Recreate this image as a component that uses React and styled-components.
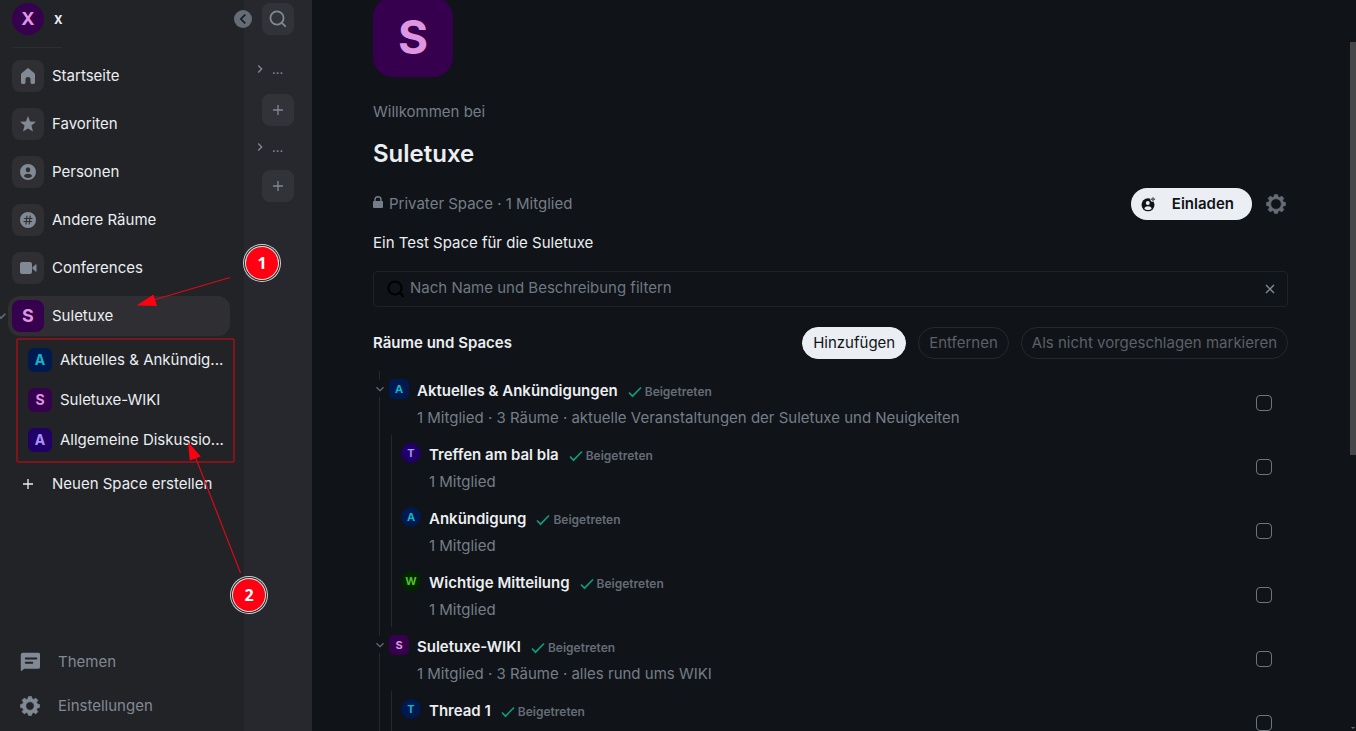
import React, { useState } from 'react'
import styled, { createGlobalStyle } from 'styled-components'

const GlobalStyle = createGlobalStyle`
  * {
    box-sizing: border-box;
  }
  body {
    margin: 0;
    background: #101317;
    color: #ebeef2;
    font-family: Inter, sans-serif;
    font-size: 15px;
    line-height: 24px;
    overflow: hidden;
  }
  button, input {
    font: inherit;
    color: inherit;
  }
  button {
    padding: 0;
    border: 0;
    background: none;
    cursor: pointer;
  }
  h1, h2, h3, p, ul {
    margin: 0;
    padding: 0;
  }
  ul {
    list-style: none;
  }
  svg {
    display: block;
    flex: none;
  }
`

const Page = styled.div`
  position: relative;
  display: flex;
  height: 100vh;
  overflow: hidden;
`

const SpacePanel = styled.nav`
  position: relative;
  display: flex;
  flex-direction: column;
  flex: 0 0 244px;
  padding: 3px 0;
  background: #212326;
`

const UserButton = styled.button`
  display: flex;
  align-items: center;
  gap: 10px;
  margin-left: 12px;
  font-weight: 600;
`

const Divider = styled.hr`
  width: 50px;
  height: 1px;
  margin: 12px 12px 8px;
  border: 0;
  background: #2b2d31;
`

const CollapseButton = styled.button`
  position: absolute;
  z-index: 1;
  top: 10px;
  right: -8px;
  display: grid;
  place-items: center;
  width: 18px;
  height: 18px;
  border-radius: 50%;
  background: #656c76;
  color: #17191c;
`

const colours = {
  purple: ['#36004e', '#de96e0'],
  blue: ['#00194f', '#15b3c7'],
  indigo: ['#200066', '#aa93f8'],
  green: ['#002600', '#56c02c'],
}

const Avatar = styled.span`
  display: grid;
  place-items: center;
  flex: none;
  width: ${p => p.$size}px;
  height: ${p => p.$size}px;
  border-radius: ${p => (p.$round ? '50%' : p.$size / 4 + 'px')};
  background: ${p => colours[p.$tone][0]};
  color: ${p => colours[p.$tone][1]};
  font-size: ${p => p.$font}px;
  font-weight: 700;
  line-height: 1;
`

const SpaceButton = styled.button`
  position: relative;
  display: flex;
  align-items: center;
  gap: 8px;
  width: 222px;
  height: 40px;
  margin: 0 0 8px 8px;
  padding: 0 4px;
  border-radius: 12px;
  background: ${p => (p.$active ? '#2f2f33' : 'none')};
  text-align: left;
`

const IconTile = styled.span`
  display: grid;
  place-items: center;
  width: 32px;
  height: 32px;
  border-radius: 8px;
  background: ${p => (p.$plain ? 'none' : '#2f2f33')};
  color: ${p => (p.$plain ? '#ebeef2' : '#808994')};
`

const OpenMark = styled.span`
  position: absolute;
  left: -12px;
  top: 15px;
  color: #656c76;
`

const SubSpaces = styled.ul`
  padding: 0 14px 0 28px;
  margin: -4px 0 4px;
`

const SubSpaceButton = styled.button`
  display: flex;
  align-items: center;
  gap: 8px;
  width: 100%;
  height: 40px;
  text-align: left;
  white-space: nowrap;
`

const PanelFooter = styled.div`
  display: flex;
  flex-direction: column;
  margin-top: auto;
`

const FooterButton = styled.button`
  display: flex;
  align-items: center;
  gap: 18px;
  height: 44px;
  padding-left: 20px;
  color: #808994;
`

const RoomList = styled.aside`
  display: flex;
  flex-direction: column;
  align-items: center;
  flex: 0 0 68px;
  padding-top: 3px;
  background: #27282d;
`

const TileButton = styled.button`
  display: grid;
  place-items: center;
  width: 32px;
  height: 32px;
  border-radius: 8px;
  background: #323338;
  color: #808994;
`

const SectionToggle = styled.button`
  display: flex;
  align-items: center;
  gap: 8px;
  align-self: flex-start;
  height: 24px;
  margin: ${p => (p.$first ? '22px 0 13px 12px' : '9px 0 11px 12px')};
  color: #808994;
  font-size: 13px;
`

const Main = styled.main`
  flex: 1;
  min-width: 0;
  padding: 0 68px 0 61px;
  overflow: hidden;
`

const Hero = styled.header`
  margin-top: -3px;
`

const Welcome = styled.p`
  margin-top: 23px;
  color: #757e88;
`

const Title = styled.h1`
  margin: 14px 0 18px;
  font-size: 24px;
  font-weight: 600;
  line-height: 32px;
`

const InfoBar = styled.div`
  display: flex;
  align-items: center;
  height: 32px;
  margin-bottom: 11px;
  color: #757e88;
`

const InfoText = styled.span`
  flex: 1;
  margin-left: 6px;
`

const LockIcon = styled.svg`
  margin-bottom: 5px;
`

const InviteButton = styled.button`
  display: flex;
  align-items: center;
  gap: 16px;
  height: 32px;
  margin-right: 14px;
  padding: 0 18px 0 9px;
  border-radius: 16px;
  background: #ebeef2;
  color: #101317;
  font-weight: 600;
`

const SettingsButton = styled.button`
  margin-right: 2px;
  color: #656c76;
`

const Filter = styled.label`
  display: flex;
  align-items: center;
  height: 36px;
  margin: 16px 0 20px;
  padding: 0 12px;
  border: 1px solid #1f2226;
  border-radius: 4px;
  color: #000;
`

const FilterInput = styled.input`
  flex: 1;
  min-width: 0;
  height: 30px;
  margin: 0 4px 3px;
  padding: 0;
  border: 0;
  outline: 0;
  background: none;
  color: #ebeef2;
  &::placeholder {
    color: #6f7882;
    opacity: 1;
  }
`

const ClearButton = styled.button`
  color: #808994;
`

const Toolbar = styled.div`
  display: flex;
  align-items: center;
  gap: 12px;
  margin-bottom: 12px;
`

const ToolbarTitle = styled.h2`
  flex: 1;
  font-size: 15px;
  font-weight: 600;
`

const PillButton = styled.button`
  height: 32px;
  padding: 0 10px;
  border: 1px solid ${p => (p.$primary ? '#ebeef2' : '#25282c')};
  border-radius: 16px;
  background: ${p => (p.$primary ? '#ebeef2' : 'none')};
  color: ${p => (p.$primary ? '#101317' : '#5c6067')};
`

const Tree = styled.ul`
  margin-left: 6px;
  border-left: 1px solid #25282c;
`

const Branch = styled.li`
  position: relative;
`

const Children = styled.ul`
  margin-left: 11px;
  border-left: 1px solid #25282c;
`

const Room = styled.div`
  display: flex;
  align-items: center;
  gap: 8px;
  height: 64px;
  padding: 0 16px 0 9px;
`

const RoomBody = styled.div`
  flex: 1;
  min-width: 0;
  padding-top: 2px;
`

const RoomTitle = styled.div`
  display: flex;
  align-items: center;
`

const RoomName = styled.h3`
  margin-right: 10px;
  font-size: 15px;
  font-weight: 600;
`

const Joined = styled.span`
  display: flex;
  align-items: center;
  gap: 3px;
  padding-top: 2px;
  color: #656c76;
  font-size: 12px;
  line-height: 22px;
  font-weight: 600;
  svg {
    color: #129a78;
  }
`

const RoomTopic = styled.p`
  margin-top: 3px;
  color: #757e88;
`

const AvatarSlot = styled.div`
  align-self: flex-start;
  padding-top: 8px;
`

const BranchToggle = styled.button`
  position: absolute;
  top: 9px;
  left: -8px;
  display: grid;
  place-items: center;
  width: 16px;
  height: 17px;
  background: #101317;
  color: #656c76;
`

const Check = styled.input`
  appearance: none;
  width: 16px;
  height: 16px;
  margin: 0;
  border: 1px solid #70757c;
  border-radius: 4px;
`

const ScrollThumb = styled.div`
  position: absolute;
  top: 42px;
  right: 0;
  width: 6px;
  height: 413px;
  background: #464648;
`

const ScrollArrow = styled.svg`
  position: absolute;
  right: 1px;
  bottom: 2px;
`

const Arrows = styled.svg`
  position: absolute;
  z-index: 2;
  top: 0;
  left: 0;
  pointer-events: none;
`

const Marker = styled.span`
  position: absolute;
  z-index: 3;
  left: ${p => p.$x}px;
  top: ${p => p.$y}px;
  display: grid;
  place-items: center;
  width: 32px;
  height: 32px;
  border-radius: 50%;
  background: #ff0012;
  box-shadow: 0 0 0 1px #e4e4e4, 0 0 0 2px #222, 0 0 0 3px #d4d4d4;
  color: #fff;
  font: 700 16px/1 'Open Sans', sans-serif;
`

const Chevron = ({ size = 8, turn = 0 }) => (
  <svg width={size} height={size} viewBox="0 0 8 8" fill="none" stroke="currentColor" strokeWidth="1.3">
    <path d="M.5 2.2 4 5.7 7.5 2.2" transform={`rotate(${turn} 4 4)`} />
  </svg>
)

const Plus = ({ size, width = 1.3 }) => (
  <svg width={size} height={size} viewBox="0 0 10 10" stroke="currentColor" strokeWidth={width}>
    <path d="M5 0v10M0 5h10" />
  </svg>
)

const Search = ({ width = 1.8 }) => (
  <svg width="20" height="20" viewBox="0 0 20 20" fill="none" stroke="currentColor" strokeWidth={width} strokeLinecap="round">
    <circle cx="9" cy="9" r="6.6" />
    <path d="m13.8 13.8 3.4 3.4" />
  </svg>
)

const Gear = ({ hole = 4.2, size = 20 }) => (
  <svg width={size} height={size} viewBox="0 0 20 20">
    <path
      fill="currentColor"
      stroke="currentColor"
      strokeWidth=".6"
      strokeLinejoin="round"
      fillRule="evenodd"
      d={`M8.500.4h3l.6 2.300 1.600.7L15.700 2.100 17.900 4.300 16.600 6.300l.7 1.600L19.600 8.500v3l-2.300.6-.7 1.600 1.300 2-2.200 2.200-2-1.300-1.600.7L11.500 19.600h-3l-.6-2.300-1.600-.7-2 1.300-2.200-2.200 1.300-2-.7-1.600L.4 11.500v-3l2.300-.6.7-1.600L2.100 4.300 4.300 2.100l2 1.300 1.600-.7zM10 ${10 - hole}a${hole} ${hole} 0 1 0 0 ${hole * 2}a${hole} ${hole} 0 1 0 0 -${hole * 2}z`}
    />
  </svg>
)

const Home = () => (
  <svg width="16" height="16" viewBox="0 0 16 16" fill="currentColor">
    <path d="M7.300.4a1.100 1.100 0 0 1 1.400 0l5.500 4.500c.5.400.8 1 .8 1.600v8.100c0 .8-.6 1.400-1.400 1.400h-1.700c-.8 0-1.400-.6-1.400-1.400v-3.300C10.500 9.900 9.500 9 8 9s-2.500.9-2.500 2.300v3.300c0 .8-.6 1.400-1.400 1.400H2.400C1.600 16 1 15.400 1 14.600V6.500c0-.6.300-1.200.8-1.600z" />
  </svg>
)

const Star = () => (
  <svg width="16" height="16" viewBox="0 0 16 16" fill="currentColor">
    <path d="m8 0 2.100 5.500 5.900.3-4.600 3.700L13 15.600 8 12.400l-5 3.200 1.600-6.100L0 5.800l5.900-.3z" />
  </svg>
)

const Person = () => (
  <svg width="16" height="16" viewBox="0 0 16 16">
    <path
      fill="currentColor"
      fillRule="evenodd"
      d="M8 0a8 8 0 1 1 0 16A8 8 0 0 1 8 0zm0 3.300a2.300 2.500 0 1 0 0 5 2.300 2.500 0 1 0 0-5zM3.800 12C4.600 13.300 6.200 14 8 14s3.400-.7 4.200-2c-.8-1.400-2.400-2.300-4.200-2.300S4.600 10.600 3.800 12z"
    />
  </svg>
)

const Hash = () => (
  <svg width="16" height="16" viewBox="0 0 16 16">
    <circle cx="8" cy="8" r="8" fill="currentColor" />
    <path d="M7 4 6 12M10.200 4l-1 8M4.300 6.500h7.700M4 9.500h7.700" stroke="#2f2f33" strokeWidth="1.200" strokeLinecap="round" />
  </svg>
)

const Video = () => (
  <svg width="17" height="12" viewBox="0 0 17 12" fill="currentColor">
    <rect width="12" height="12" rx="2" />
    <path d="M12.500 5.200 15.600 2.500c.4-.3.900-.1.900.4v6.200c0 .5-.5.700-.9.400l-3.100-2.700z" />
  </svg>
)

const Thread = () => (
  <svg width="20" height="20" viewBox="0 0 20 20">
    <path d="M2.800.8h16A1.900 1.900 0 0 1 20 2.700v12.200a1.900 1.900 0 0 1-1.900 1.900H4.300L1.400 19c-.3.200-.6 0-.6-.4V2.700C.8 1.600 1.700.8 2.800.8z" fill="currentColor" />
    <path d="M5.800 6.500h10.500M5.800 10.700h6.500" stroke="#212326" strokeWidth="2" strokeLinecap="round" />
  </svg>
)

const Invite = () => (
  <svg width="16" height="16" viewBox="0 0 16 16">
    <circle cx="8" cy="8.800" r="6.500" fill="currentColor" />
    <circle cx="7.800" cy="7" r="2" fill="#ebeef2" />
    <path d="M4.300 12.400C4.900 10.900 6.200 10.200 8 10.200s3.100.7 3.700 2.200C10.800 13.600 9.500 14 8 14s-2.800-.4-3.700-1.600z" fill="#ebeef2" />
    <circle cx="13" cy="3.300" r="2.600" fill="#ebeef2" />
    <path d="M13 1.200v4.200M10.900 3.300h4.200" stroke="#5c6067" strokeWidth="1.500" />
  </svg>
)

const Tick = () => (
  <svg width="14" height="12" viewBox="0 0 14 12" fill="none" stroke="currentColor" strokeWidth="1.700">
    <path d="m1 6.500 3.500 3.700L13 1.500" />
  </svg>
)

const navItems = [
  { label: 'Startseite', icon: <Home /> },
  { label: 'Favoriten', icon: <Star /> },
  { label: 'Personen', icon: <Person /> },
  { label: 'Andere Räume', icon: <Hash /> },
  { label: 'Conferences', icon: <Video /> },
]

const subSpaces = [
  { letter: 'A', tone: 'blue', label: 'Aktuelles & Ankündig...' },
  { letter: 'S', tone: 'purple', label: 'Suletuxe-WIKI' },
  { letter: 'A', tone: 'indigo', label: 'Allgemeine Diskussio...' },
]

const tree = [
  {
    letter: 'A',
    tone: 'blue',
    name: 'Aktuelles & Ankündigungen',
    topic: '1 Mitglied · 3 Räume · aktuelle Veranstaltungen der Suletuxe und Neuigkeiten',
    rooms: [
      { letter: 'T', tone: 'indigo', name: 'Treffen am bal bla', topic: '1 Mitglied' },
      { letter: 'A', tone: 'blue', name: 'Ankündigung', topic: '1 Mitglied' },
      { letter: 'W', tone: 'green', name: 'Wichtige Mitteilung', topic: '1 Mitglied' },
    ],
  },
  {
    letter: 'S',
    tone: 'purple',
    name: 'Suletuxe-WIKI',
    topic: '1 Mitglied · 3 Räume · alles rund ums WIKI',
    rooms: [{ letter: 'T', tone: 'blue', name: 'Thread 1' }],
  },
]

const RoomRow = ({ room, round }) => (
  <Room>
    <AvatarSlot>
      <Avatar $size={20} $font={11} $tone={room.tone} $round={round}>{room.letter}</Avatar>
    </AvatarSlot>
    <RoomBody>
      <RoomTitle>
        <RoomName>{room.name}</RoomName>
        <Joined><Tick />Beigetreten</Joined>
      </RoomTitle>
      <RoomTopic>{room.topic || '\u00a0'}</RoomTopic>
    </RoomBody>
    <Check type="checkbox" aria-label={room.name} />
  </Room>
)

const App = () => {
  const [filter, setFilter] = useState('')

  return (
    <Page>
      <GlobalStyle />
      <SpacePanel>
        <UserButton>
          <Avatar $size={32} $font={18} $tone="purple" $round>X</Avatar>
          x
        </UserButton>
        <CollapseButton aria-label="Einklappen"><Chevron size={10} turn={90} /></CollapseButton>
        <Divider />
        {navItems.map(item => (
          <SpaceButton key={item.label}>
            <IconTile>{item.icon}</IconTile>
            {item.label}
          </SpaceButton>
        ))}
        <SpaceButton $active>
          <OpenMark><Chevron size={10} /></OpenMark>
          <Avatar $size={32} $font={18} $tone="purple">S</Avatar>
          Suletuxe
        </SpaceButton>
        <SubSpaces>
          {subSpaces.map(space => (
            <li key={space.label}>
              <SubSpaceButton>
                <Avatar $size={24} $font={14} $tone={space.tone}>{space.letter}</Avatar>
                {space.label}
              </SubSpaceButton>
            </li>
          ))}
        </SubSpaces>
        <SpaceButton>
          <IconTile $plain><Plus size={10} /></IconTile>
          Neuen Space erstellen
        </SpaceButton>
        <PanelFooter>
          <FooterButton><Thread />Themen</FooterButton>
          <FooterButton><Gear />Einstellungen</FooterButton>
        </PanelFooter>
      </SpacePanel>

      <RoomList>
        <TileButton aria-label="Suchen"><Search /></TileButton>
        <SectionToggle $first><Chevron turn={-90} />...</SectionToggle>
        <TileButton aria-label="Hinzufügen"><Plus size={10} /></TileButton>
        <SectionToggle><Chevron turn={-90} />...</SectionToggle>
        <TileButton aria-label="Hinzufügen"><Plus size={10} /></TileButton>
      </RoomList>

      <Main>
        <Hero>
          <Avatar $size={80} $font={46} $tone="purple">S</Avatar>
          <Welcome>Willkommen bei</Welcome>
          <Title>Suletuxe</Title>
        </Hero>
        <InfoBar>
          <LockIcon width="10" height="12" viewBox="0 0 10 12">
            <rect y="5" width="10" height="7" rx="1" fill="currentColor" />
            <path d="M2 6V3.500a3 2.800 0 0 1 6 0V6" fill="none" stroke="currentColor" strokeWidth="1.400" />
          </LockIcon>
          <InfoText>Privater Space · 1 Mitglied</InfoText>
          <InviteButton><Invite />Einladen</InviteButton>
          <SettingsButton aria-label="Einstellungen"><Gear hole={5.3} /></SettingsButton>
        </InfoBar>
        <p>Ein Test Space für die Suletuxe</p>
        <Filter>
          <Search width={2} />
          <FilterInput
            value={filter}
            onChange={e => setFilter(e.target.value)}
            aria-label="Nach Name und Beschreibung filtern"
            placeholder="Nach Name und Beschreibung filtern"
          />
          <ClearButton aria-label="Leeren" onClick={() => setFilter('')}>
            <svg width="10" height="10" viewBox="0 0 10 10" stroke="currentColor" strokeWidth="1.400">
              <path d="m1 1 8 8M9 1 1 9" />
            </svg>
          </ClearButton>
        </Filter>
        <Toolbar>
          <ToolbarTitle>Räume und Spaces</ToolbarTitle>
          <PillButton $primary>Hinzufügen</PillButton>
          <PillButton>Entfernen</PillButton>
          <PillButton>Als nicht vorgeschlagen markieren</PillButton>
        </Toolbar>
        <Tree>
          {tree.map(space => (
            <Branch key={space.name}>
              <BranchToggle aria-label={space.name}><Chevron /></BranchToggle>
              <RoomRow room={space} />
              <Children>
                {space.rooms.map(room => (
                  <li key={room.name}><RoomRow room={room} round /></li>
                ))}
              </Children>
            </Branch>
          ))}
        </Tree>
      </Main>

      <ScrollThumb />
      <ScrollArrow width="4" height="2" viewBox="0 0 4 2"><path d="M0 0h4L2 2z" fill="#656c76" /></ScrollArrow>

      <Arrows width="300" height="620" viewBox="0 0 300 620">
        <rect x="17" y="339" width="217" height="123" rx="1" fill="none" stroke="#a01018" strokeWidth="1.500" />
        <path d="M230 277.500 150 301M240.500 573 195 456" stroke="#d80a18" strokeWidth="1.200" />
        <path d="m136.500 305.500 17-11 3.500 11.500zM188 442l1.800 18.500 11-4z" fill="#ff0012" />
      </Arrows>
      <Marker $x={246} $y={247}>1</Marker>
      <Marker $x={233} $y={579}>2</Marker>
    </Page>
  )
}

export default App
